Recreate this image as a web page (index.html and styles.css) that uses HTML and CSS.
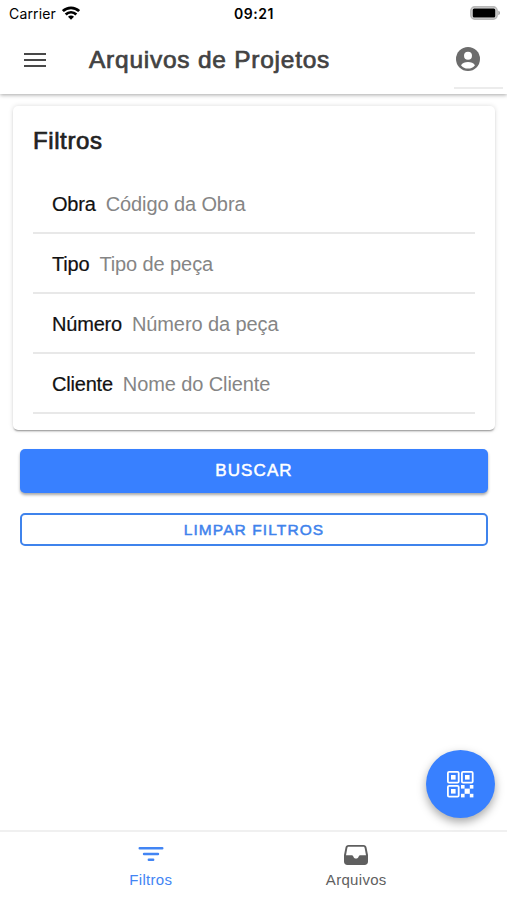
FILE: index.html
```
<!DOCTYPE html>
<html lang="pt-BR">
<head>
  <meta charset="UTF-8">
  <meta name="viewport" content="width=device-width, initial-scale=1">
  <title>Arquivos de Projetos</title>
  <link rel="stylesheet" href="styles.css">
</head>
<body>
  <header class="header">
    <div class="status-bar">
      <div class="carrier">
        <span>Carrier</span>
        <svg width="18" height="14" viewBox="0 0 18 14" fill="none" stroke="#000" stroke-width="2.7">
          <path d="M0.9 5.1a11.6 11.6 0 0 1 16.2 0"/>
          <path d="M3.7 8.5a7.4 7.4 0 0 1 10.6 0"/>
          <path d="M9 13.8L6 10.8a4.2 4.2 0 0 1 6 0z" fill="#000" stroke="none"/>
        </svg>
      </div>
      <span class="time">09:21</span>
      <svg class="battery" width="30" height="14" viewBox="0 0 30 14">
        <rect x="0.9" y="0.9" width="26.200" height="12.200" rx="3.8" fill="#e4e4e4" stroke="#b8b8b8" stroke-width="1.600"/>
        <rect x="2.7" y="2.5" width="22.600" height="9" rx="1.5" fill="#000"/>
        <path d="M28.4 4.8c2 .6 2 3.800 0 4.400z" fill="#999"/>
      </svg>
    </div>
    <div class="toolbar">
      <button class="menu-button" aria-label="Menu">
        <svg width="24" height="16" viewBox="0 0 24 16" stroke="#484848" stroke-width="2.2">
          <path d="M1 2h22M1 8h22M1 14h22"/>
        </svg>
      </button>
      <h1>Arquivos de Projetos</h1>
      <button class="user-button" aria-label="Usuário">
        <svg width="24" height="24" viewBox="0 0 24 24">
          <circle cx="12" cy="12" r="12" fill="#6c6c6c"/>
          <circle cx="12" cy="8.800" r="4" fill="#fff"/>
          <path d="M5 18.2c1.4-2.1 4-3.2 7-3.2s5.600 1.100 7 3.200c-1.600 2.100-4.100 3.400-7 3.400s-5.400-1.300-7-3.400z" fill="#fff"/>
        </svg>
      </button>
    </div>
  </header>

  <main>
    <form>
      <section class="card">
        <h2>Filtros</h2>
        <label class="item"><span>Obra</span><input type="text" placeholder="Código da Obra"></label>
        <label class="item"><span>Tipo</span><input type="text" placeholder="Tipo de peça"></label>
        <label class="item"><span>Número</span><input type="text" placeholder="Número da peça"></label>
        <label class="item"><span>Cliente</span><input type="text" placeholder="Nome do Cliente"></label>
      </section>
      <div class="actions">
        <button type="button" class="btn btn-solid">BUSCAR</button>
        <button type="reset" class="btn btn-outline">LIMPAR FILTROS</button>
      </div>
    </form>
  </main>

  <button class="fab" aria-label="Ler QR code">
    <svg width="27" height="27" viewBox="0 0 27 27" fill="#fff">
      <g fill="none" stroke="#fff" stroke-width="1.8">
        <rect x="0.9" y="0.9" width="10.800" height="10.800" rx="1.2"/>
        <rect x="14.900" y="0.9" width="10.800" height="10.800" rx="1.2"/>
        <rect x="0.9" y="14.900" width="10.800" height="10.800" rx="1.2"/>
      </g>
      <rect x="4" y="4" width="4.600" height="4.600"/>
      <rect x="18" y="4" width="4.600" height="4.600"/>
      <rect x="4" y="18" width="4.600" height="4.600"/>
      <rect x="14" y="14" width="3.600" height="3.600"/>
      <rect x="22.800" y="14" width="3.600" height="3.600"/>
      <rect x="17.600" y="17.600" width="5.200" height="5.200"/>
      <rect x="14" y="22.800" width="3.600" height="3.600"/>
      <rect x="22.800" y="22.800" width="3.600" height="3.600"/>
    </svg>
  </button>

  <nav class="tabs">
    <a class="tab active">
      <svg width="26" height="22" viewBox="0 0 26 22" stroke="currentColor" stroke-width="2.4" stroke-linecap="round">
        <path d="M1.700 4.200h22.600M6 10h14M10.800 15.800h4.400"/>
      </svg>
      <span>Filtros</span>
    </a>
    <a class="tab">
      <svg width="26" height="22" viewBox="0 0 26 22">
        <path d="M5.500 1h15c1.800 0 2.700.9 3 2.500L25 11v6.500c0 2.200-1.300 3.500-3.500 3.500h-17C2.300 21 1 19.700 1 17.500V11L2.500 3.500C2.800 1.900 3.700 1 5.500 1z" fill="currentColor"/>
        <path d="M6 2.800h14c1 0 1.500.5 1.700 1.400L23 11.200h-5.800c-.7 0-1.100.4-1.400 1-.5 1.400-1.400 2.300-2.800 2.300s-2.300-.9-2.800-2.300c-.3-.6-.7-1-1.400-1H3l1.300-7C4.500 3.300 5 2.800 6 2.800z" fill="#fff"/>
      </svg>
      <span>Arquivos</span>
    </a>
  </nav>
</body>
</html>
```
FILE: styles.css
```
* {
  box-sizing: border-box;
}

body {
  margin: 0;
  height: 100vh;
  display: flex;
  flex-direction: column;
  background: #fff;
  font-family: "Liberation Sans", Arial, sans-serif;
  overflow: hidden;
}

button {
  font-family: inherit;
  border: none;
  background: none;
  padding: 0;
}

svg {
  display: block;
}

.header {
  height: 94px;
  background: #fff;
  box-shadow: 0 1px 4px rgba(0, 0, 0, 0.35);
}

.status-bar {
  height: 27px;
  padding: 0 7px 0 9px;
  display: grid;
  grid-template-columns: 1fr auto 1fr;
  align-items: center;
  font-family: Inter, sans-serif;
  font-size: 14px;
}

.carrier {
  display: flex;
  align-items: center;
  gap: 6px;
  letter-spacing: 0.15px;
}

.carrier svg {
  margin-top: -2px;
}

.time {
  font-weight: 600;
  letter-spacing: 0.5px;
  margin-right: 1px;
}

.battery {
  justify-self: end;
  margin-top: -1px;
}

.toolbar {
  height: 65px;
  display: flex;
  align-items: center;
  padding-left: 23px;
}

.menu-button {
  width: 24px;
}

h1 {
  flex: 1;
  margin: 0 0 0 42px;
  font-size: 24.5px;
  font-weight: 400;
  letter-spacing: 0.75px;
  color: #424242;
  -webkit-text-stroke: 0.7px #424242;
}

.user-button {
  width: 49px;
  height: 59px;
  margin: 0 4px 0 0;
  padding-left: 2px;
  border-bottom: 2px solid #ececec;
}

.card {
  margin: 12px 12px 0 13px;
  height: 324px;
  padding: 21px 20px 0;
  border-radius: 5px;
  box-shadow: 0 2px 2px -1px rgba(0, 0, 0, 0.4), 0 0 5px rgba(0, 0, 0, 0.14);
}

h2 {
  margin: 0 0 19px;
  font-size: 24px;
  line-height: 28px;
  font-weight: 400;
  letter-spacing: 0.6px;
  color: #222;
  -webkit-text-stroke: 0.7px #222;
}

.item {
  height: 60px;
  padding: 2px 0 0 19px;
  display: flex;
  align-items: center;
  gap: 10px;
  border-bottom: 2px solid #e8e8e8;
  font-size: 20px;
  letter-spacing: -0.2px;
  color: #111;
}

.item span {
  -webkit-text-stroke: 0.2px #111;
}

.item input {
  flex: 1;
  min-width: 0;
  padding: 0;
  border: none;
  outline: none;
  background: none;
  font: inherit;
  letter-spacing: -0.1px;
}

.item input::placeholder {
  color: #858585;
}

.actions {
  display: flex;
  flex-direction: column;
  gap: 20px;
  padding: 19px 19px 0 20px;
}

.btn {
  border-radius: 5px;
  letter-spacing: 1.1px;
}

.btn-solid {
  height: 44px;
  background: #3880ff;
  color: #fff;
  font-size: 17px;
  -webkit-text-stroke: 0.5px #fff;
  box-shadow: 0 2px 3px rgba(0, 0, 0, 0.35);
}

.btn-outline {
  height: 33px;
  border: 2px solid #3f83ec;
  color: #3f83ec;
  font-size: 15.5px;
  -webkit-text-stroke: 0.5px #3f83ec;
}

/* floats over the content, above the tab bar */
.fab {
  position: absolute;
  right: 12px;
  bottom: 82px;
  width: 69px;
  height: 68px;
  border-radius: 50%;
  background: #3880ff;
  display: flex;
  align-items: center;
  justify-content: center;
  box-shadow: 0 4px 10px rgba(0, 0, 0, 0.35);
}

.tabs {
  margin-top: auto;
  height: 70px;
  padding: 0 48px;
  display: flex;
  border-top: 2px solid #f0f0f0;
}

.tab {
  flex: 1;
  display: flex;
  flex-direction: column;
  align-items: center;
  padding-top: 12px;
  gap: 5px;
  font-size: 15px;
  letter-spacing: 0.3px;
  color: #5f5f5f;
}

.tab.active {
  color: #4285f4;
}
```
